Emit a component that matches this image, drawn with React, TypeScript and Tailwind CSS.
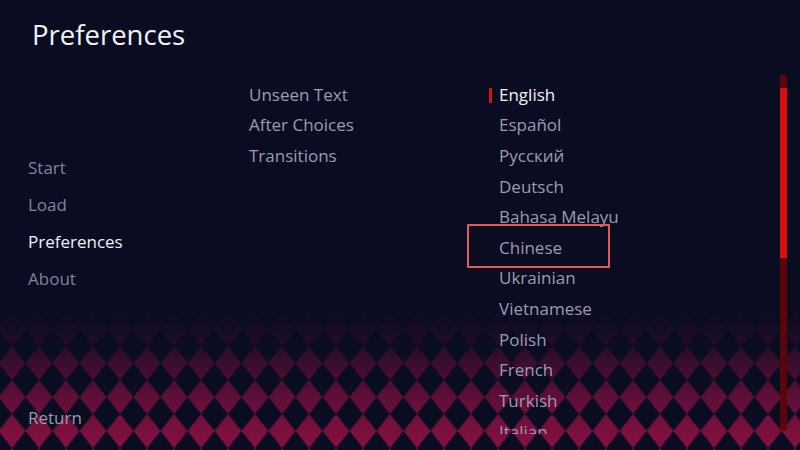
import React from "react";

const navItems = [
  { label: "Start", active: false },
  { label: "Load", active: false },
  { label: "Preferences", active: true },
  { label: "About", active: false },
];

const skipItems = ["Unseen Text", "After Choices", "Transitions"];

const languages = [
  "English",
  "Español",
  "Русский",
  "Deutsch",
  "Bahasa Melayu",
  "Chinese",
  "Ukrainian",
  "Vietnamese",
  "Polish",
  "French",
  "Turkish",
  "Italian",
  "Português",
];

function DiamondBackdrop() {
  return (
    <svg
      className="absolute left-0 bottom-0 w-[800px] h-[150px] pointer-events-none"
      viewBox="0 0 800 150"
    >
      <defs>
        <pattern
          id="harlequin"
          patternUnits="userSpaceOnUse"
          width="27"
          height="34"
          x="-1.5"
          y="12"
        >
          <path d="M13.5 0 L27 17 L13.5 34 L0 17 Z" fill="#8e1143" />
        </pattern>
        <linearGradient id="fade" x1="0" y1="0" x2="0" y2="1">
          <stop offset="0" stopColor="#fff" stopOpacity="0" />
          <stop offset="0.2" stopColor="#fff" stopOpacity="0.08" />
          <stop offset="0.45" stopColor="#fff" stopOpacity="0.4" />
          <stop offset="0.75" stopColor="#fff" stopOpacity="0.75" />
          <stop offset="1" stopColor="#fff" stopOpacity="0.95" />
        </linearGradient>
        <mask id="fadeMask">
          <rect width="800" height="150" fill="url(#fade)" />
        </mask>
      </defs>
      <rect width="800" height="150" fill="url(#harlequin)" mask="url(#fadeMask)" />
    </svg>
  );
}

export default function App() {
  return (
    <div
      className="relative w-[800px] h-[450px] overflow-hidden bg-[#0a0c22] text-[#8a8a9a]"
      style={{ fontFamily: '"Open Sans", "DejaVu Sans", sans-serif' }}
    >
      <DiamondBackdrop />

      <div className="relative flex flex-col h-full">
        <h1 className="pl-[32px] pt-[15px] h-[75px] text-[27.5px] leading-[40px] text-[#f2f2f7]">
          Preferences
        </h1>

        <div className="flex flex-1 min-h-0">
          {/* navigation */}
          <nav className="w-[240px] flex flex-col pl-[28px] pb-[21px] text-[17px]">
            <div className="flex flex-col gap-[14px] pt-[81px]">
              {navItems.map((n) => (
                <div
                  key={n.label}
                  className={`leading-[23px] ${n.active ? "text-[#f0f0f6]" : "text-[#83839a]"}`}
                >
                  {n.label}
                </div>
              ))}
            </div>
            <div className="mt-auto leading-[23px] text-[#9a9aac]">Return</div>
          </nav>

          {/* scrolling content */}
          <div className="flex h-[359px]">
            <div className="w-[540px] overflow-hidden">
              <div className="flex -mt-[26px] text-[17px] leading-[30.64px]">
                <div className="w-[250px] pl-[9px]">
                  <div className="text-[#e4e4ee]">Skip</div>
                  {skipItems.map((s) => (
                    <div key={s} className="text-[#9c9cae]">
                      {s}
                    </div>
                  ))}
                </div>
                <div className="w-[250px] pl-[9px]">
                  <div className="text-[#e4e4ee]">Language</div>
                  {languages.map((l, i) => (
                    <div
                      key={l}
                      className={`relative ${i === 0 ? "text-[#f2f2f8]" : "text-[#9c9cae]"}`}
                    >
                      {i === 0 && (
                        <span className="absolute -left-[10px] top-[8px] w-[3px] h-[15px] bg-[#d41212]" />
                      )}
                      {l}
                    </div>
                  ))}
                </div>
              </div>
            </div>
            {/* scrollbar */}
            <div className="w-[7px] h-[355px] bg-[#5a0509] flex flex-col">
              <div className="mt-[13px] h-[170px] bg-[#d81010]" />
            </div>
          </div>
        </div>
      </div>

      {/* outline around one entry */}
      <div className="absolute left-[467px] top-[224px] w-[143px] h-[44px] border-2 border-[#e5575b] rounded-[1px]" />
    </div>
  );
}
